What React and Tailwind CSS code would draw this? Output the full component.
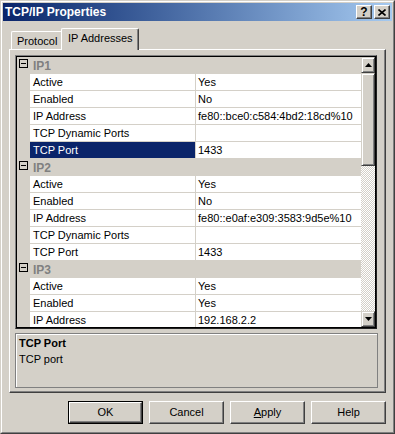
import React from "react";

const groups = [
  {
    name: "IP1",
    rows: [
      ["Active", "Yes"],
      ["Enabled", "No"],
      ["IP Address", "fe80::bce0:c584:4bd2:18cd%10"],
      ["TCP Dynamic Ports", ""],
      ["TCP Port", "1433", true],
    ],
  },
  {
    name: "IP2",
    rows: [
      ["Active", "Yes"],
      ["Enabled", "No"],
      ["IP Address", "fe80::e0af:e309:3583:9d5e%10"],
      ["TCP Dynamic Ports", ""],
      ["TCP Port", "1433"],
    ],
  },
  {
    name: "IP3",
    rows: [
      ["Active", "Yes"],
      ["Enabled", "Yes"],
      ["IP Address", "192.168.2.2"],
    ],
  },
];

function TitleBtn({ children }) {
  return (
    <div className="w-[16px] h-[14px] bg-[#d4d0c8] border border-t-white border-l-white border-r-[#404040] border-b-[#404040] shadow-[inset_-1px_-1px_0_#808080] flex items-center justify-center">
      {children}
    </div>
  );
}

function ScrollBtn({ up }) {
  return (
    <div className="h-[16px] shrink-0 bg-[#d4d0c8] border border-t-[#d4d0c8] border-l-[#d4d0c8] border-r-[#404040] border-b-[#404040] shadow-[inset_1px_1px_0_#fff,inset_-1px_-1px_0_#808080] flex items-center justify-center">
      <svg width="7" height="4" viewBox="0 0 7 4">
        {up ? (
          <polygon points="3.5,0 7,4 0,4" fill="#000" />
        ) : (
          <polygon points="0,0 7,0 3.5,4" fill="#000" />
        )}
      </svg>
    </div>
  );
}

function Button({ children, isDefault }) {
  const inner = (
    <div className="w-full h-full bg-[#d4d0c8] border border-t-white border-l-white border-r-[#404040] border-b-[#404040] shadow-[inset_-1px_-1px_0_#808080] flex items-center justify-center text-[11px] leading-none">
      {children}
    </div>
  );
  if (isDefault) {
    return <div className="w-[75px] h-[23px] border border-black">{inner}</div>;
  }
  return <div className="w-[75px] h-[23px]">{inner}</div>;
}

function Category({ name }) {
  return (
    <div className="h-[17px] shrink-0 flex items-start bg-[#d4d0c8]">
      <div className="ml-[2px] mt-[2px] w-[9px] h-[9px] border border-black flex items-center justify-center">
        <div className="w-[5px] h-px bg-black" />
      </div>
      <span className="ml-[5px] pt-[1px] text-[12px] leading-[16px] font-bold text-[#808080]">{name}</span>
    </div>
  );
}

function Row({ name, value, selected }) {
  return (
    <div className="h-[17px] shrink-0 flex bg-[#d4d0c8]">
      <div className="w-[13px]" />
      <div
        className={
          selected
            ? "w-[165px] h-[16px] bg-[#0a246a] text-white pl-[3px] leading-[16px] whitespace-nowrap"
            : "w-[165px] h-[16px] bg-white pl-[3px] leading-[16px] whitespace-nowrap"
        }
      >
        {name}
      </div>
      <div className="w-px" />
      <div className="w-[165px] h-[16px] bg-white pl-[2px] leading-[16px] whitespace-nowrap overflow-hidden">{value}</div>
    </div>
  );
}

export default function App() {
  return (
    <div className="w-[395px] h-[434px] bg-[#d4d0c8] font-['Liberation_Sans',Arial,sans-serif] text-[11px] text-black border border-t-[#d4d0c8] border-l-[#d4d0c8] border-r-[#404040] border-b-[#404040] overflow-hidden">
      <div className="h-full border border-t-white border-l-white border-r-[#808080] border-b-[#808080] p-px flex flex-col">
        {/* Title bar */}
        <div className="h-[18px] shrink-0 flex items-center bg-linear-to-r from-[#0a246a] to-[#a6caf0] pl-[2px] pr-[2px]">
          <span className="text-white font-bold text-[12px] leading-[18px] whitespace-nowrap">TCP/IP Properties</span>
          <div className="ml-auto flex gap-[2px]">
            <TitleBtn>
              <span className="font-bold text-[12px] leading-none text-black">?</span>
            </TitleBtn>
            <TitleBtn>
              <svg width="8" height="7" viewBox="0 0 8 7">
                <path d="M0.5 0.5 L7.5 6.5 M7.5 0.5 L0.5 6.5" stroke="#000" strokeWidth="1.6" />
              </svg>
            </TitleBtn>
          </div>
        </div>

        {/* Body */}
        <div className="flex-1 flex flex-col px-[6px] pt-[7px]">
          {/* Tabs */}
          <div className="h-[21px] shrink-0 flex items-end pl-[2px]">
            <div className="w-[50px] h-[18px] border-t border-l border-white rounded-tl-[2px] pl-[5px] pt-[2px] leading-[14px] whitespace-nowrap">
              Protocol
            </div>
            <div className="relative z-10 -mb-px w-[78px] h-[22px] bg-[#d4d0c8] border-t border-l border-r border-t-white border-l-white border-r-[#404040] rounded-t-[2px] shadow-[inset_-1px_0_0_#808080] pl-[6px] pt-[2px] leading-[14px] whitespace-nowrap">
              IP Addresses
            </div>
          </div>

          {/* Panel */}
          <div className="w-[377px] h-[344px] shrink-0 border border-t-white border-l-white border-r-[#404040] border-b-[#404040] shadow-[inset_-1px_-1px_0_#808080] pl-[5px] pt-[5px] flex flex-col">
            {/* Property grid */}
            <div className="w-[362px] h-[274px] shrink-0 border border-t-[#808080] border-l-[#808080] border-r-[#202020] border-b-[#202020]">
              <div className="w-full h-full border border-black flex">
                <div className="w-[344px] h-full overflow-hidden flex flex-col">
                  {groups.map((g) => (
                    <React.Fragment key={g.name}>
                      <Category name={g.name} />
                      {g.rows.map((r, i) => (
                        <Row key={i} name={r[0]} value={r[1]} selected={r[2]} />
                      ))}
                    </React.Fragment>
                  ))}
                </div>
                <div className="w-[14px] h-full flex flex-col">
                  <ScrollBtn up />
                  <div className="h-[93px] shrink-0 bg-[#d4d0c8] border border-t-[#d4d0c8] border-l-[#d4d0c8] border-r-[#404040] border-b-[#404040] shadow-[inset_1px_1px_0_#fff,inset_-1px_-1px_0_#808080]" />
                  <div className="flex-1 bg-[image:repeating-conic-gradient(#fff_0_25%,#d4d0c8_0_50%)] bg-[length:2px_2px]" />
                  <ScrollBtn />
                </div>
              </div>
            </div>

            {/* Description */}
            <div className="mt-[4px] w-[363px] h-[55px] shrink-0 border border-[#808080] shadow-[inset_1px_1px_0_#fff] pl-[3px] pt-[1px]">
              <div className="font-bold leading-[16px]">TCP Port</div>
              <div className="leading-[16px]">TCP port</div>
            </div>
          </div>

          {/* Buttons */}
          <div className="mt-[8px] flex justify-end gap-[6px] w-[377px]">
            <Button isDefault>OK</Button>
            <Button>Cancel</Button>
            <Button>
              <span>
                <span className="underline">A</span>pply
              </span>
            </Button>
            <Button>Help</Button>
          </div>
        </div>
      </div>
    </div>
  );
}
